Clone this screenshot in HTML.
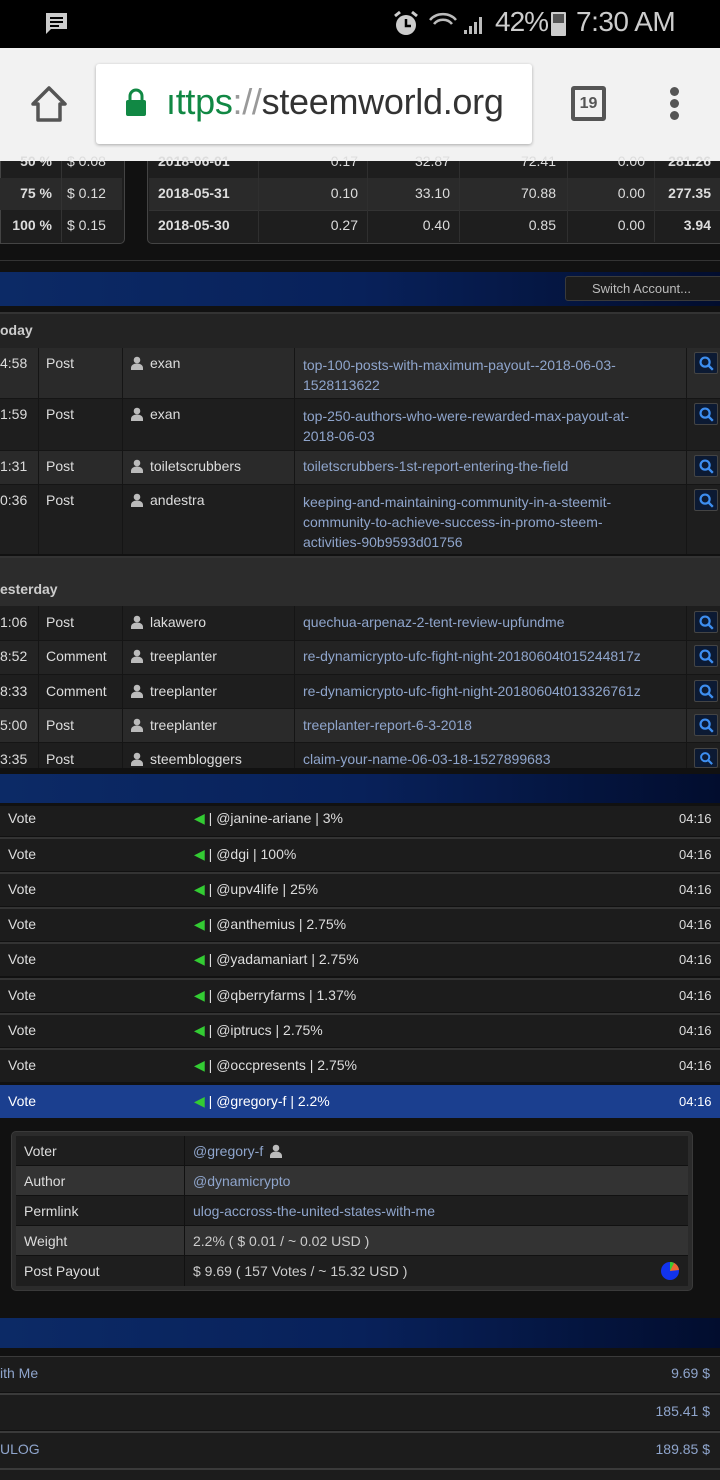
<!DOCTYPE html>
<html><head><meta charset="utf-8"><style>
*{margin:0;padding:0;box-sizing:border-box}
body{width:720px;height:1480px;overflow:hidden;background:#111;font-family:"Liberation Sans",sans-serif;color:#ddd;position:relative}
.a{position:absolute}
.t{font-size:14px;white-space:nowrap}
.blue{background:linear-gradient(90deg,#0c2a66,#08215a 50%,#020d2e)}
.lnk{color:#8fa5cc}
.usr{display:inline-block;width:14px;height:14px;vertical-align:-2px;margin-right:6px}
.srch{position:absolute;left:694px;width:24px;height:22px;border:1px solid #444;background:#0c1a33;border-radius:2px}
</style></head><body>
<!-- status bar -->
<div class="a" style="left:0;top:0;width:720px;height:48px;background:#000"></div>
<svg class="a" style="left:44px;top:12px" width="26" height="24" viewBox="0 0 26 24"><path d="M2 1h21v16H7l-5 5z" fill="#ccc"/><path d="M6 6h13M6 10h13M6 14h9" stroke="#000" stroke-width="2"/></svg>
<svg class="a" style="left:392px;top:10px" width="28" height="28" viewBox="0 0 28 28"><circle cx="14" cy="15" r="10" fill="#ccc"/><path d="M14 9v7h5" stroke="#000" stroke-width="2.5" fill="none"/><path d="M3 6l5-4M25 6l-5-4" stroke="#ccc" stroke-width="3"/></svg>
<svg class="a" style="left:428px;top:12px" width="60" height="24" viewBox="0 0 60 24"><path d="M2 8a16 14 0 0 1 26 0M6 12a11 10 0 0 1 18 0" stroke="#bbb" stroke-width="2.5" fill="none"/><path d="M36 22h3v-4h-3zM41 22h3v-8h-3zM46 22h3v-12h-3zM51 22h3v-17h-3z" fill="#bbb"/></svg>
<div class="a" style="left:495px;top:6px;font-size:28px;color:#ccc;letter-spacing:-1px">42%</div>
<div class="a" style="left:551px;top:12px;width:15px;height:24px;background:#ccc;border-radius:1px"></div>
<div class="a" style="left:553px;top:14px;width:11px;height:9px;background:#555"></div>
<div class="a" style="left:576px;top:6px;font-size:28px;color:#ccc;letter-spacing:-0.5px">7:30 AM</div>
<!-- chrome -->
<div class="a" style="left:0;top:48px;width:720px;height:112px;background:#f2f2f2"></div>
<svg class="a" style="left:29px;top:84px" width="40" height="40" viewBox="0 0 40 40"><path d="M4 20L20 4l16 16h-5v16H9V20z" fill="none" stroke="#555" stroke-width="3.5" stroke-linejoin="round"/></svg>
<div class="a" style="left:96px;top:64px;width:436px;height:80px;background:#fff;border-radius:3px;box-shadow:0 1px 3px rgba(0,0,0,.3)"></div>
<svg class="a" style="left:124px;top:88px" width="24" height="30" viewBox="0 0 24 30"><path d="M6 13V8a6 6 0 0 1 12 0v5" stroke="#118844" stroke-width="3" fill="none"/><rect x="2" y="12" width="20" height="16" rx="2" fill="#118844"/></svg>
<div class="a" style="left:166px;top:81px;font-size:36px;color:#333;white-space:nowrap;letter-spacing:-0.3px"><span style="color:#118844">ıttps</span><span style="color:#999">://</span>steemworld.org</div>
<div class="a" style="left:571px;top:86px;width:35px;height:35px;border:4px solid #555;border-radius:3px;font:bold 16px 'Liberation Sans',sans-serif;color:#555;text-align:center;line-height:27px">19</div>
<div class="a" style="left:670px;top:87px;width:9px;height:9px;border-radius:50%;background:#555;box-shadow:0 12px 0 #555,0 24px 0 #555"></div>
<!-- top tables -->
<div class="a" style="left:0;top:160px;width:125px;height:84px;background:#1e1e1e;border:1px solid #444;border-top:0;border-radius:0 0 5px 0"></div>
<div class="a" style="left:0;top:178px;width:122px;height:32px;background:#2a2a2a"></div>
<div class="a" style="left:61px;top:160px;width:1px;height:82px;background:#333"></div>
<div class="a t" style="left:10px;top:153px;font-weight:bold;width:42px;text-align:right">50 %</div><div class="a t" style="left:67px;top:153px">$ 0.08</div>
<div class="a t" style="left:10px;top:185px;font-weight:bold;width:42px;text-align:right">75 %</div><div class="a t" style="left:67px;top:185px">$ 0.12</div>
<div class="a t" style="left:10px;top:217px;font-weight:bold;width:42px;text-align:right">100 %</div><div class="a t" style="left:67px;top:217px">$ 0.15</div>
<div class="a" style="left:147px;top:160px;width:573px;height:84px;background:#1e1e1e;border:1px solid #444;border-top:0;border-right:0;border-radius:0 0 0 5px"></div>
<div class="a" style="left:149px;top:178px;width:571px;height:32px;background:#2a2a2a"></div>
<div class="a" style="left:149px;top:210px;width:571px;height:1px;background:#333"></div>
<div class="a" style="left:258px;top:160px;width:1px;height:82px;background:#2f2f2f;box-shadow:109px 0 #2f2f2f,201px 0 #2f2f2f,309px 0 #2f2f2f,396px 0 #2f2f2f"></div>
<div class="a t" style="left:158px;top:153px;font-weight:bold">2018-06-01</div>
<div class="a t" style="left:158px;top:185px;font-weight:bold">2018-05-31</div>
<div class="a t" style="left:158px;top:217px;font-weight:bold">2018-05-30</div>
<div class="a t" style="left:258px;top:153px;width:100px;text-align:right">0.17</div><div class="a t" style="left:368px;top:153px;width:82px;text-align:right">32.87</div><div class="a t" style="left:460px;top:153px;width:96px;text-align:right">72.41</div><div class="a t" style="left:568px;top:153px;width:77px;text-align:right">0.00</div><div class="a t" style="left:655px;top:153px;width:56px;text-align:right;font-weight:bold">281.26</div>
<div class="a t" style="left:258px;top:185px;width:100px;text-align:right">0.10</div><div class="a t" style="left:368px;top:185px;width:82px;text-align:right">33.10</div><div class="a t" style="left:460px;top:185px;width:96px;text-align:right">70.88</div><div class="a t" style="left:568px;top:185px;width:77px;text-align:right">0.00</div><div class="a t" style="left:655px;top:185px;width:56px;text-align:right;font-weight:bold">277.35</div>
<div class="a t" style="left:258px;top:217px;width:100px;text-align:right">0.27</div><div class="a t" style="left:368px;top:217px;width:82px;text-align:right">0.40</div><div class="a t" style="left:460px;top:217px;width:96px;text-align:right">0.85</div><div class="a t" style="left:568px;top:217px;width:77px;text-align:right">0.00</div><div class="a t" style="left:655px;top:217px;width:56px;text-align:right;font-weight:bold">3.94</div>
<div class="a" style="left:0;top:160px;width:720px;height:1px;background:#f2f2f2"></div>
<div class="a" style="left:0;top:260px;width:720px;height:1px;background:#333"></div>
<!-- blue bar 1 -->
<div class="a blue" style="left:0;top:272px;width:720px;height:34px"></div>
<div class="a t" style="left:565px;top:276px;width:160px;height:25px;background:#1c1c1c;border:1px solid #3a3a3a;border-radius:3px;color:#bbb;padding:4px 0 0 26px;font-size:13px">Switch Account...</div>
<!-- today -->
<div class="a" style="left:0;top:312px;width:720px;height:36px;background:#232323;border-top:2px solid #333"></div>
<div class="a t" style="left:0;top:322px;font-weight:bold;color:#ccc">oday</div>
<div class="a" style="left:0;top:348px;width:720px;height:50px;background:#2a2a2a"></div>
<div class="a" style="left:0;top:398px;width:720px;height:52px;background:#1e1e1e"></div>
<div class="a" style="left:0;top:450px;width:720px;height:34px;background:#2a2a2a"></div>
<div class="a" style="left:0;top:484px;width:720px;height:70px;background:#1e1e1e"></div>
<div class="a" style="left:0;top:556px;width:720px;height:50px;background:#2c2c2c;border-top:2px solid #333"></div>
<div class="a t" style="left:0;top:581px;font-weight:bold;color:#ccc">esterday</div>
<div class="a" style="left:0;top:606px;width:720px;height:34px;background:#1e1e1e"></div>
<div class="a" style="left:0;top:640px;width:720px;height:34px;background:#232323"></div>
<div class="a" style="left:0;top:674px;width:720px;height:34px;background:#1e1e1e"></div>
<div class="a" style="left:0;top:708px;width:720px;height:34px;background:#2a2a2a"></div>
<div class="a" style="left:0;top:742px;width:720px;height:26px;background:#1e1e1e"></div>
<div class="a" style="left:38px;top:348px;width:1px;height:206px;background:#151515;box-shadow:84px 0 #151515,256px 0 #151515,648px 0 #151515"></div>
<div class="a" style="left:38px;top:606px;width:1px;height:162px;background:#151515;box-shadow:84px 0 #151515,256px 0 #151515,648px 0 #151515"></div>
<div class="a" style="left:0;top:398px;width:720px;height:1px;background:#151515;box-shadow:0 52px #151515,0 86px #151515,0 242px #151515,0 276px #151515,0 310px #151515,0 344px #151515"></div>
<svg width="0" height="0" style="position:absolute"><defs><symbol id="u" viewBox="0 0 14 14"><circle cx="7" cy="4" r="3.3" fill="#bbb"/><path d="M1 14v-2c0-3 3-4.5 6-4.5s6 1.5 6 4.5v2z" fill="#bbb"/></symbol><symbol id="s" viewBox="0 0 24 22"><circle cx="11" cy="10" r="5" stroke="#3d8ef0" stroke-width="2.4" fill="none"/><path d="M14.5 13.5l5 5" stroke="#3d8ef0" stroke-width="2.6"/></symbol></defs></svg>
<!-- post rows -->
<div class="a t" style="left:0;top:355px">4:58</div><div class="a t" style="left:46px;top:355px">Post</div><div class="a t" style="left:130px;top:355px"><svg class="usr"><use href="#u"/></svg>exan</div><div class="a t lnk" style="left:303px;top:355px;line-height:20px">top-100-posts-with-maximum-payout--2018-06-03-<br>1528113622</div><svg class="srch" style="top:352px"><use href="#s"/></svg>
<div class="a t" style="left:0;top:406px">1:59</div><div class="a t" style="left:46px;top:406px">Post</div><div class="a t" style="left:130px;top:406px"><svg class="usr"><use href="#u"/></svg>exan</div><div class="a t lnk" style="left:303px;top:406px;line-height:20px">top-250-authors-who-were-rewarded-max-payout-at-<br>2018-06-03</div><svg class="srch" style="top:403px"><use href="#s"/></svg>
<div class="a t" style="left:0;top:458px">1:31</div><div class="a t" style="left:46px;top:458px">Post</div><div class="a t" style="left:130px;top:458px"><svg class="usr"><use href="#u"/></svg>toiletscrubbers</div><div class="a t lnk" style="left:303px;top:458px">toiletscrubbers-1st-report-entering-the-field</div><svg class="srch" style="top:455px"><use href="#s"/></svg>
<div class="a t" style="left:0;top:492px">0:36</div><div class="a t" style="left:46px;top:492px">Post</div><div class="a t" style="left:130px;top:492px"><svg class="usr"><use href="#u"/></svg>andestra</div><div class="a t lnk" style="left:303px;top:492px;line-height:20px">keeping-and-maintaining-community-in-a-steemit-<br>community-to-achieve-success-in-promo-steem-<br>activities-90b9593d01756</div><svg class="srch" style="top:489px"><use href="#s"/></svg>
<div class="a t" style="left:0;top:614px">1:06</div><div class="a t" style="left:46px;top:614px">Post</div><div class="a t" style="left:130px;top:614px"><svg class="usr"><use href="#u"/></svg>lakawero</div><div class="a t lnk" style="left:303px;top:614px">quechua-arpenaz-2-tent-review-upfundme</div><svg class="srch" style="top:611px"><use href="#s"/></svg>
<div class="a t" style="left:0;top:648px">8:52</div><div class="a t" style="left:46px;top:648px">Comment</div><div class="a t" style="left:130px;top:648px"><svg class="usr"><use href="#u"/></svg>treeplanter</div><div class="a t lnk" style="left:303px;top:648px">re-dynamicrypto-ufc-fight-night-20180604t015244817z</div><svg class="srch" style="top:645px"><use href="#s"/></svg>
<div class="a t" style="left:0;top:683px">8:33</div><div class="a t" style="left:46px;top:683px">Comment</div><div class="a t" style="left:130px;top:683px"><svg class="usr"><use href="#u"/></svg>treeplanter</div><div class="a t lnk" style="left:303px;top:683px">re-dynamicrypto-ufc-fight-night-20180604t013326761z</div><svg class="srch" style="top:680px"><use href="#s"/></svg>
<div class="a t" style="left:0;top:717px">5:00</div><div class="a t" style="left:46px;top:717px">Post</div><div class="a t" style="left:130px;top:717px"><svg class="usr"><use href="#u"/></svg>treeplanter</div><div class="a t lnk" style="left:303px;top:717px">treeplanter-report-6-3-2018</div><svg class="srch" style="top:714px"><use href="#s"/></svg>
<div class="a t" style="left:0;top:751px">3:35</div><div class="a t" style="left:46px;top:751px">Post</div><div class="a t" style="left:130px;top:751px"><svg class="usr"><use href="#u"/></svg>steembloggers</div><div class="a t lnk" style="left:303px;top:751px">claim-your-name-06-03-18-1527899683</div><svg class="srch" style="top:748px;height:20px"><use href="#s"/></svg>
<div class="a" style="left:0;top:768px;width:720px;height:6px;background:#111"></div>
<!-- blue bar 2 -->
<div class="a blue" style="left:0;top:774px;width:720px;height:29px"></div>
<!-- votes -->
<div class="a" style="left:0;top:806px;width:720px;height:30px;background:#1c1c1c"></div>
<div class="a" style="left:0;top:839px;width:720px;height:32px;background:#1c1c1c;box-shadow:0 35px #1c1c1c,0 70px #1c1c1c,0 105px #1c1c1c,0 141px #1c1c1c,0 176px #1c1c1c,0 211px #1c1c1c"></div>
<div class="a" style="left:0;top:837px;width:720px;height:2px;background:#333;box-shadow:0 35px #333,0 70px #333,0 105px #333,0 141px #333,0 176px #333,0 211px #333"></div>
<div class="a" style="left:0;top:1085px;width:720px;height:33px;background:#1b3f8f"></div>
<div class="a t" style="left:8px;top:810px">Vote</div><div class="a t" style="left:194px;top:810px"><span style="color:#3c3">◀</span> | @janine-ariane | 3%</div><div class="a t" style="left:679px;top:811px;font-size:13px">04:16</div>
<div class="a t" style="left:8px;top:846px">Vote</div><div class="a t" style="left:194px;top:846px"><span style="color:#3c3">◀</span> | @dgi | 100%</div><div class="a t" style="left:679px;top:847px;font-size:13px">04:16</div>
<div class="a t" style="left:8px;top:881px">Vote</div><div class="a t" style="left:194px;top:881px"><span style="color:#3c3">◀</span> | @upv4life | 25%</div><div class="a t" style="left:679px;top:882px;font-size:13px">04:16</div>
<div class="a t" style="left:8px;top:916px">Vote</div><div class="a t" style="left:194px;top:916px"><span style="color:#3c3">◀</span> | @anthemius | 2.75%</div><div class="a t" style="left:679px;top:917px;font-size:13px">04:16</div>
<div class="a t" style="left:8px;top:951px">Vote</div><div class="a t" style="left:194px;top:951px"><span style="color:#3c3">◀</span> | @yadamaniart | 2.75%</div><div class="a t" style="left:679px;top:952px;font-size:13px">04:16</div>
<div class="a t" style="left:8px;top:987px">Vote</div><div class="a t" style="left:194px;top:987px"><span style="color:#3c3">◀</span> | @qberryfarms | 1.37%</div><div class="a t" style="left:679px;top:988px;font-size:13px">04:16</div>
<div class="a t" style="left:8px;top:1022px">Vote</div><div class="a t" style="left:194px;top:1022px"><span style="color:#3c3">◀</span> | @iptrucs | 2.75%</div><div class="a t" style="left:679px;top:1023px;font-size:13px">04:16</div>
<div class="a t" style="left:8px;top:1057px">Vote</div><div class="a t" style="left:194px;top:1057px"><span style="color:#3c3">◀</span> | @occpresents | 2.75%</div><div class="a t" style="left:679px;top:1058px;font-size:13px">04:16</div>
<div class="a t" style="left:8px;top:1093px;color:#fff">Vote</div><div class="a t" style="left:194px;top:1093px;color:#fff"><span style="color:#3c3">◀</span> | @gregory-f | 2.2%</div><div class="a t" style="left:679px;top:1094px;font-size:13px;color:#fff">04:16</div>
<!-- detail box -->
<div class="a" style="left:11px;top:1131px;width:682px;height:160px;background:#2b2b2b;border-radius:5px;border:1px solid #3a3a3a"></div>
<div class="a" style="left:16px;top:1136px;width:672px;height:150px;background:#1e1e1e"></div>
<div class="a" style="left:16px;top:1166px;width:672px;height:30px;background:#333;box-shadow:0 60px #333"></div>
<div class="a" style="left:16px;top:1165px;width:672px;height:1px;background:#111;box-shadow:0 30px #111,0 60px #111,0 90px #111"></div>
<div class="a" style="left:184px;top:1136px;width:1px;height:150px;background:#111"></div>
<div class="a t" style="left:24px;top:1143px">Voter</div><div class="a t lnk" style="left:193px;top:1143px">@gregory-f <svg class="usr" style="margin-left:2px"><use href="#u"/></svg></div>
<div class="a t" style="left:24px;top:1173px">Author</div><div class="a t lnk" style="left:193px;top:1173px">@dynamicrypto</div>
<div class="a t" style="left:24px;top:1203px">Permlink</div><div class="a t lnk" style="left:193px;top:1203px">ulog-accross-the-united-states-with-me</div>
<div class="a t" style="left:24px;top:1233px">Weight</div><div class="a t" style="left:193px;top:1233px;color:#ccc">2.2% ( $ 0.01 / ~ 0.02 USD )</div>
<div class="a t" style="left:24px;top:1263px">Post Payout</div><div class="a t" style="left:193px;top:1263px;color:#ccc">$ 9.69 ( 157 Votes / ~ 15.32 USD )</div>
<svg class="a" style="left:660px;top:1261px" width="20" height="20" viewBox="0 0 20 20"><circle cx="10" cy="10" r="9" fill="#1133ee"/><path d="M10 10V1a9 9 0 0 1 9 8z" fill="#e63"/><path d="M10 10V1a9 9 0 0 1 4 1z" fill="#3c3"/></svg>
<!-- blue bar 3 -->
<div class="a blue" style="left:0;top:1318px;width:720px;height:30px"></div>
<div class="a" style="left:0;top:1356px;width:720px;height:36px;background:#1c1c1c;border-top:1px solid #3a3a3a"></div>
<div class="a" style="left:0;top:1393px;width:720px;height:37px;background:#1c1c1c;border-top:2px solid #3a3a3a"></div>
<div class="a" style="left:0;top:1431px;width:720px;height:37px;background:#1c1c1c;border-top:2px solid #3a3a3a"></div>
<div class="a" style="left:0;top:1468px;width:720px;height:12px;background:#1c1c1c;border-top:2px solid #3a3a3a"></div>
<div class="a t lnk" style="left:0;top:1365px">ith Me</div><div class="a t lnk" style="left:600px;top:1365px;width:110px;text-align:right">9.69 $</div>
<div class="a t lnk" style="left:600px;top:1403px;width:110px;text-align:right">185.41 $</div>
<div class="a t lnk" style="left:0;top:1441px">ULOG</div><div class="a t lnk" style="left:600px;top:1441px;width:110px;text-align:right">189.85 $</div>
</body></html>
